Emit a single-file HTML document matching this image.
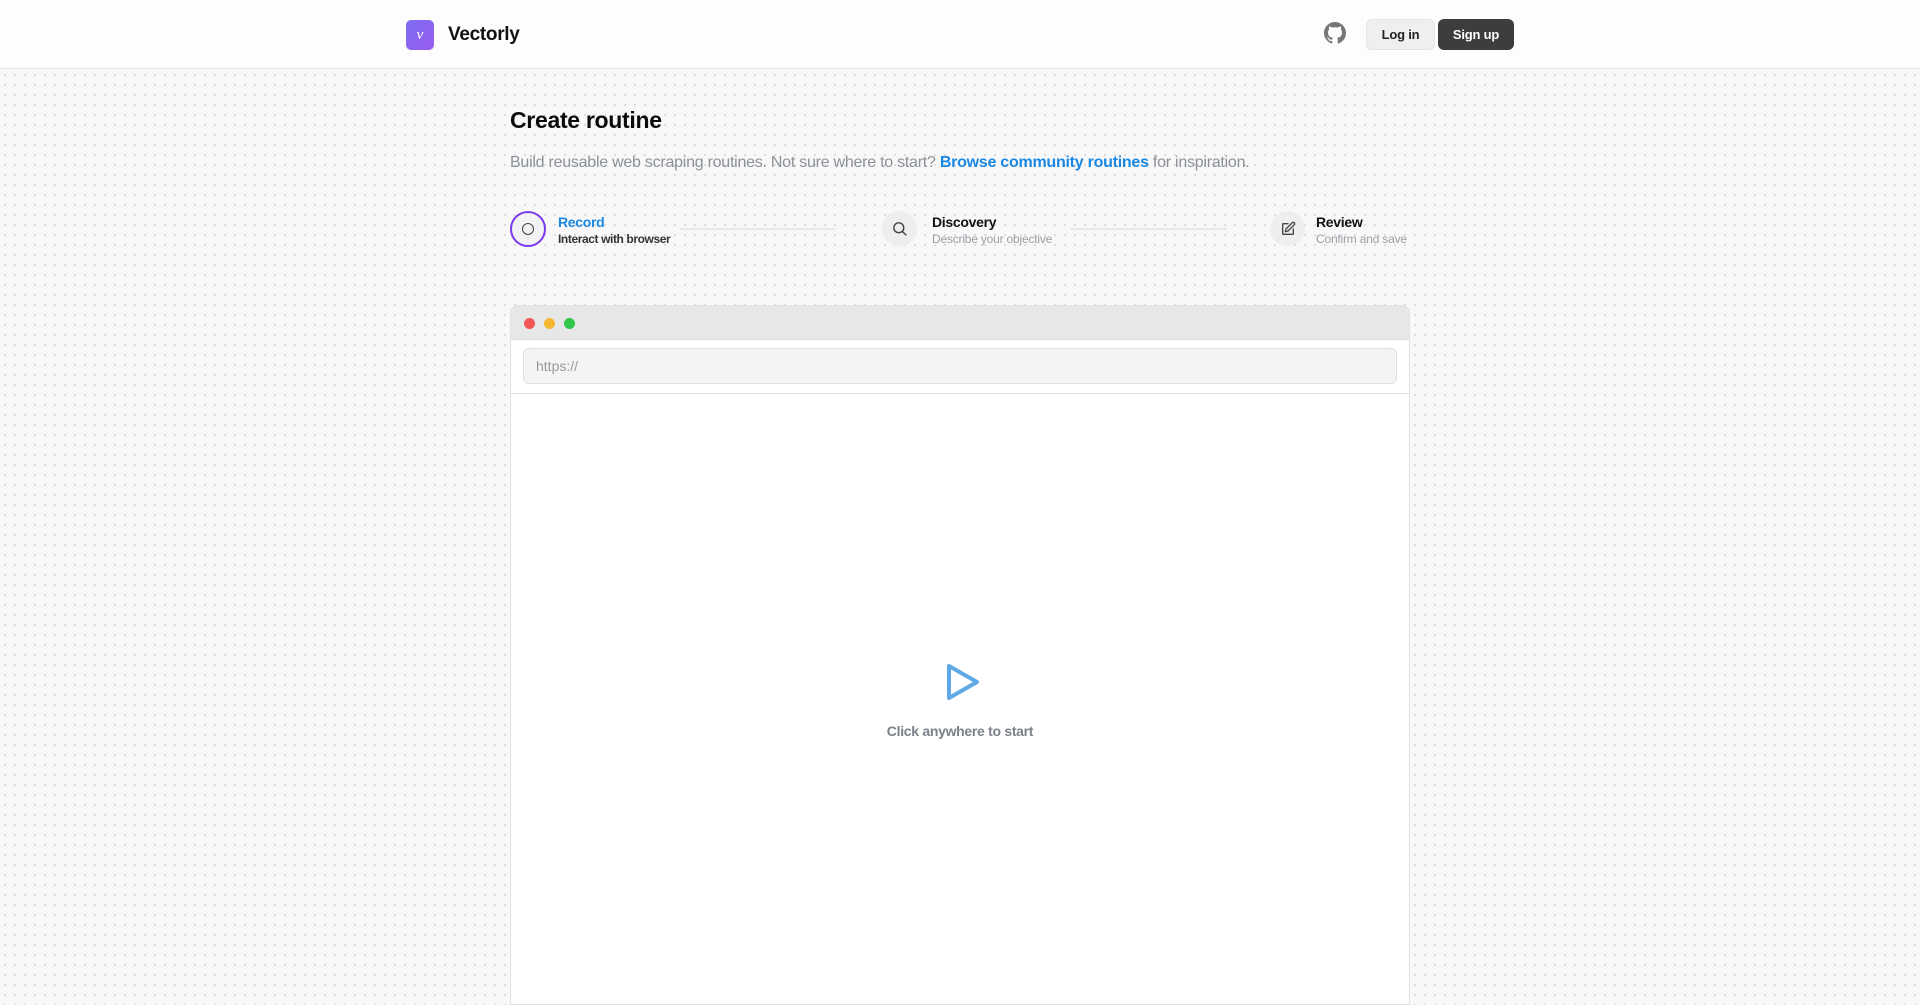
<!DOCTYPE html>
<html><head><meta charset="utf-8"><style>
*{box-sizing:border-box;margin:0;padding:0}
body{width:1920px;height:993px;overflow:hidden;font-family:"Liberation Sans",Arial,sans-serif;background:#f8f8f8;background-image:radial-gradient(circle,#dadada 1px,transparent 1.2px);background-size:10px 10px;position:relative}
.hdr{position:absolute;left:0;top:0;width:1920px;height:69px;background:#fdfdfd;border-bottom:1px solid #e6e6e6}
.abs{position:absolute}
.logo{left:406px;top:20px;width:28px;height:30px;border-radius:5px;background:linear-gradient(135deg,#7b6ef0,#9b5cf0);color:#fff;font-family:"Liberation Serif",serif;font-style:italic;font-size:15px;display:flex;align-items:center;justify-content:center}
.btn{top:19px;height:31px;border-radius:6px;font-size:13px;font-weight:bold;display:flex;align-items:center;justify-content:center;letter-spacing:-0.2px}
.circ{width:35px;height:35px;border-radius:50%;background:#eceef0;display:flex;align-items:center;justify-content:center}
.st{font-size:14px;font-weight:bold;color:#111;letter-spacing:-0.3px}
.ss{font-size:12px;color:#9a9ea5;letter-spacing:-0.2px}
.line{height:2px;background:#e6e8ec;top:228px}
</style></head><body>
<div class="hdr"></div>
<div class="abs logo">v</div>
<div class="abs" style="left:448px;top:24px;font-size:19px;font-weight:bold;color:#111;letter-spacing:-0.3px">Vectorly</div>
<svg class="abs" style="left:1324px;top:22px" width="22" height="22" viewBox="0 0 16 16"><path fill="#777" d="M8 0C3.580 0 0 3.58 0 8c0 3.54 2.29 6.53 5.47 7.59.4.07.55-.17.55-.38 0-.19-.01-.82-.01-1.490-2.01.37-2.53-.49-2.69-.94-.09-.23-.48-.94-.82-1.130-.28-.15-.68-.52-.01-.53.63-.01 1.080.58 1.230.82.72 1.21 1.87.87 2.33.66.07-.52.28-.87.51-1.07-1.780-.2-3.640-.89-3.640-3.95 0-.87.31-1.59.82-2.15-.08-.2-.36-1.02.08-2.12 0 0 .67-.21 2.2.82.64-.18 1.32-.27 2-.27.68 0 1.36.09 2 .27 1.53-1.04 2.2-.82 2.2-.82.44 1.1.16 1.92.08 2.12.51.56.82 1.27.82 2.15 0 3.07-1.87 3.75-3.65 3.95.29.25.54.73.54 1.48 0 1.07-.01 1.93-.01 2.2 0 .21.15.46.55.38A8.013 8.013 0 0016 8c0-4.42-3.58-8-8-8z"/></svg>
<div class="abs btn" style="left:1366px;width:69px;background:#efefef;border:1px solid #e4e4e4;color:#222">Log in</div>
<div class="abs btn" style="left:1438px;width:76px;background:#3d3d3d;color:#fff">Sign up</div>

<div class="abs" style="left:510px;top:107px;font-size:23px;font-weight:bold;color:#0b0b0b;letter-spacing:-0.3px">Create routine</div>
<div class="abs" style="left:510px;top:154px;font-size:16px;color:#8b9099;letter-spacing:-0.25px">Build reusable web scraping routines. Not sure where to start? <b style="color:#1a88e3">Browse community routines</b> for inspiration.</div>

<div class="abs circ" style="left:510px;top:211px;width:36px;height:36px;background:#f3f3f5;border:2px solid #7c3aed"><div style="width:12px;height:12px;border:1.5px solid #444;border-radius:50%"></div></div>
<div class="abs st" style="left:558px;top:214px;color:#1a88e3">Record</div>
<div class="abs ss" style="left:558px;top:232px;color:#333;font-weight:bold;letter-spacing:-0.4px">Interact with browser</div>
<div class="abs line" style="left:680px;width:155px"></div>

<div class="abs circ" style="left:882px;top:211px"><svg width="17" height="17" viewBox="0 0 24 24" fill="none" stroke="#444" stroke-width="2" stroke-linecap="round"><circle cx="11" cy="11" r="7"/><path d="M21 21l-5-5"/></svg></div>
<div class="abs st" style="left:932px;top:214px">Discovery</div>
<div class="abs ss" style="left:932px;top:232px">Describe your objective</div>
<div class="abs line" style="left:1070px;width:157px"></div>

<div class="abs circ" style="left:1270px;top:211px"><svg width="16" height="16" viewBox="0 0 24 24" fill="none" stroke="#444" stroke-width="2" stroke-linecap="round" stroke-linejoin="round"><path d="M12 4H5a1 1 0 00-1 1v14a1 1 0 001 1h14a1 1 0 001-1v-7"/><path d="M18.4 2.6a2 2 0 013 3L12 15l-4 1 1-4z"/></svg></div>
<div class="abs st" style="left:1316px;top:214px">Review</div>
<div class="abs ss" style="left:1316px;top:232px">Confirm and save</div>

<div class="abs" style="left:510px;top:305px;width:900px;height:700px;background:#fff;border:1px solid #e2e2e2;border-radius:8px 8px 0 0;overflow:hidden">
 <div style="height:34px;background:#e7e7e7;border-bottom:1px solid #dcdcdc;position:relative">
  <span class="abs" style="left:13px;top:12px;width:11px;height:11px;border-radius:50%;background:#f25757"></span>
  <span class="abs" style="left:33px;top:12px;width:11px;height:11px;border-radius:50%;background:#f5b731"></span>
  <span class="abs" style="left:53px;top:12px;width:11px;height:11px;border-radius:50%;background:#2fc64a"></span>
 </div>
 <div style="height:54px;border-bottom:1px solid #e4e4e4;padding:8px 12px">
  <div style="height:36px;background:#f4f4f4;border:1px solid #e0e0e0;border-radius:6px;padding:0 12px;line-height:34px;font-size:14px;color:#999">https://</div>
 </div>
 <svg class="abs" style="left:434px;top:356px" width="34" height="40" viewBox="0 0 34 40"><path d="M4 4L32 20L4 36Z" fill="none" stroke="#5ea8e6" stroke-width="4" stroke-linejoin="round"/></svg>
 <div class="abs" style="left:0;width:898px;top:417px;text-align:center;font-size:14px;color:#7b8089;font-weight:bold;letter-spacing:-0.3px">Click anywhere to start</div>
</div>
</body></html>
